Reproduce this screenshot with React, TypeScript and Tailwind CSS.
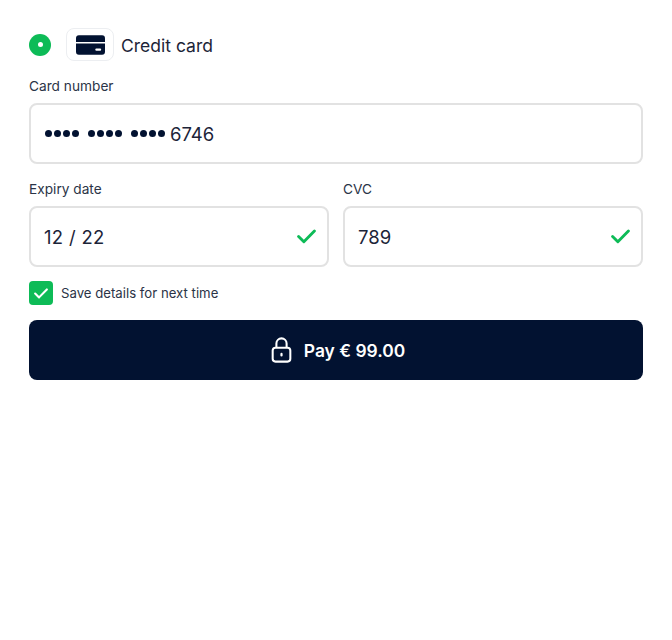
import React from 'react';

const NAVY = '#021231';

const Check = ({ className }: { className: string }) => (
  <svg viewBox="0 0 18 14" fill="none" className={className}>
    <path d="M1.5 7 L6.5 12 L16.5 1.8" stroke="currentColor" strokeWidth="2.7" strokeLinecap="round" strokeLinejoin="round" />
  </svg>
);

const Field = ({ label, value, checked }: { label: string; value: React.ReactNode; checked?: boolean }) => (
  <div className="flex-1">
    <div className="text-[13.7px] leading-5 text-[#2b3447]">{label}</div>
    <div className="mt-[7px] flex h-[61px] items-center justify-between rounded-lg border-2 border-[#e2e2e2] pl-[13px] pr-[11px] text-[18.5px] text-[#1c2438]">
      {value}
      {checked && <Check className="h-[15px] w-[19px] text-[#0dbb57]" />}
    </div>
  </div>
);

const Dots = () => (
  <span className="flex gap-[2px]">
    {[0, 1, 2, 3].map((i) => (
      <span key={i} className="h-[7px] w-[7px] rounded-full bg-[#021231]" />
    ))}
  </span>
);

export default function App() {
  return (
    <div className="min-h-[640px] bg-white pl-[29px] pr-[29px] pt-[28px] font-['Inter',sans-serif]">
      <div className="flex h-[33px] items-center">
        <span className="flex h-[22px] w-[22px] items-center justify-center rounded-full bg-[#0dbb57]">
          <span className="h-[5px] w-[5px] rounded-full bg-white" />
        </span>
        <span className="ml-[15px] flex h-[33px] w-[48px] items-center justify-center rounded-lg border border-[#eceef1]">
          <svg viewBox="0 0 30 20" className="h-[20px] w-[29px]">
            <path d="M3 0h24a3 3 0 0 1 3 3v4H0V3a3 3 0 0 1 3-3z" fill={NAVY} />
            <path d="M0 8.5h30V17a3 3 0 0 1-3 3H3a3 3 0 0 1-3-3z" fill={NAVY} />
            <rect x="20" y="13.5" width="6" height="2.5" rx="1" fill="#fff" />
          </svg>
        </span>
        <span className="relative top-[2px] ml-[7px] text-[17.5px] text-[#1c2438]">Credit card</span>
      </div>

      <div className="mt-[15px]">
        <Field
          label="Card number"
          value={
            <span className="ml-[1px] flex items-center">
              <span className="flex gap-[9px]">
                <Dots />
                <Dots />
                <Dots />
              </span>
              <span className="relative top-[1px] ml-[5px]">6746</span>
            </span>
          }
        />
      </div>

      <div className="mt-[15px] flex gap-[14px]">
        <Field label="Expiry date" value={<span className="relative top-[1px] tracking-[0.3px]">12 / 22</span>} checked />
        <Field label="CVC" value={<span className="relative top-[1px]">789</span>} checked />
      </div>

      <div className="mt-[14px] flex items-center">
        <span className="flex h-6 w-6 items-center justify-center rounded bg-[#0dbb57]">
          <Check className="h-[11px] w-[14px] text-white" />
        </span>
        <span className="relative top-[1px] ml-2 text-[13.2px] text-[#2b3447]">Save details for next time</span>
      </div>

      <button className="mt-[15px] flex h-[60px] w-full items-center justify-center rounded-lg bg-[#021231] pl-[4px] text-[17.4px] font-semibold text-white">
        <svg viewBox="0 0 22 28" fill="none" className="mr-[12px] h-[26px] w-[21px]">
          <path d="M5.5 11.5V7a5.5 5.5 0 0 1 11 0v4.5" stroke="currentColor" strokeWidth="2.2" />
          <rect x="1.5" y="11.5" width="19" height="15" rx="3" stroke="currentColor" strokeWidth="2.2" />
          <rect x="9.8" y="17" width="2.4" height="4" rx="1.2" fill="currentColor" />
        </svg>
        <span className="relative top-[1px]">Pay € 99.00</span>
      </button>
    </div>
  );
}
